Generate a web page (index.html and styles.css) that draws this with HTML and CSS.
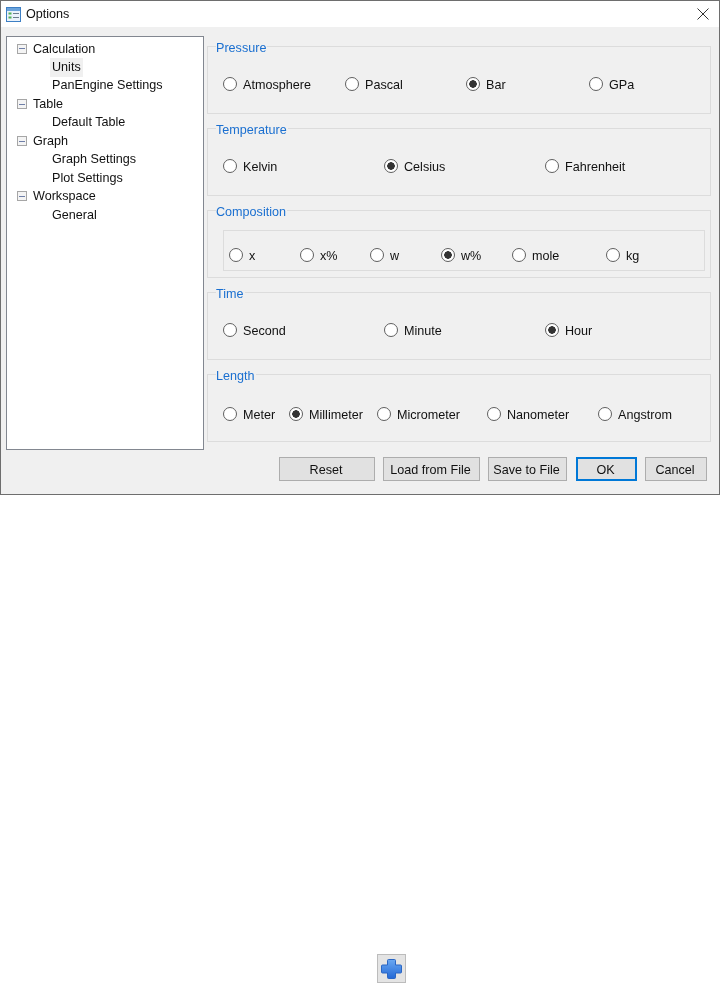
FILE: index.html
```html
<!DOCTYPE html>
<html lang="en">
<head>
<meta charset="utf-8">
<title>Options</title>
<link rel="stylesheet" href="styles.css">
</head>
<body>
<div class="window">
  <header class="titlebar">
    <svg class="title-icon" width="15" height="15" viewBox="0 0 15 15">
      <rect x="0.5" y="0.5" width="14" height="14" fill="#eaf2fb" stroke="#3d7fc4"/>
      <rect x="1" y="1" width="13" height="3" fill="#6aa3dc"/>
      <rect x="2.5" y="5.5" width="3" height="2" fill="#4fb058"/>
      <rect x="2.5" y="9.5" width="3" height="2" fill="#4fb058"/>
      <rect x="7" y="6" width="6" height="1" fill="#6b7c8f"/>
      <rect x="7" y="10" width="6" height="1" fill="#6b7c8f"/>
    </svg>
    <span class="title-text">Options</span>
    <svg class="close-icon" width="12" height="12" viewBox="0 0 12 12">
      <path d="M0.5 0.5L11.5 11.5M11.5 0.5L0.5 11.5" stroke="#333" stroke-width="1" fill="none"/>
    </svg>
  </header>
  <div class="content">
    <div class="main">
      <nav class="tree">
        <div class="node"><span class="expander"></span>Calculation</div>
        <div class="leaf"><span class="selected">Units</span></div>
        <div class="leaf"><span class="label">PanEngine Settings</span></div>
        <div class="node"><span class="expander"></span>Table</div>
        <div class="leaf"><span class="label">Default Table</span></div>
        <div class="node"><span class="expander"></span>Graph</div>
        <div class="leaf"><span class="label">Graph Settings</span></div>
        <div class="leaf"><span class="label">Plot Settings</span></div>
        <div class="node"><span class="expander"></span>Workspace</div>
        <div class="leaf"><span class="label">General</span></div>
      </nav>
      <div class="groups">
        <fieldset class="group">
          <legend>Pressure</legend>
          <div class="radios pressure">
            <label class="radio"><input type="radio" name="p">Atmosphere</label>
            <label class="radio"><input type="radio" name="p">Pascal</label>
            <label class="radio"><input type="radio" name="p" checked>Bar</label>
            <label class="radio"><input type="radio" name="p">GPa</label>
          </div>
        </fieldset>
        <fieldset class="group">
          <legend>Temperature</legend>
          <div class="radios thirds">
            <label class="radio"><input type="radio" name="t">Kelvin</label>
            <label class="radio"><input type="radio" name="t" checked>Celsius</label>
            <label class="radio"><input type="radio" name="t">Fahrenheit</label>
          </div>
        </fieldset>
        <fieldset class="group">
          <legend>Composition</legend>
          <div class="radios composition">
            <label class="radio"><input type="radio" name="c">x</label>
            <label class="radio"><input type="radio" name="c">x%</label>
            <label class="radio"><input type="radio" name="c">w</label>
            <label class="radio"><input type="radio" name="c" checked>w%</label>
            <label class="radio"><input type="radio" name="c">mole</label>
            <label class="radio"><input type="radio" name="c">kg</label>
          </div>
        </fieldset>
        <fieldset class="group">
          <legend>Time</legend>
          <div class="radios thirds">
            <label class="radio"><input type="radio" name="h">Second</label>
            <label class="radio"><input type="radio" name="h">Minute</label>
            <label class="radio"><input type="radio" name="h" checked>Hour</label>
          </div>
        </fieldset>
        <fieldset class="group">
          <legend>Length</legend>
          <div class="radios length">
            <label class="radio"><input type="radio" name="l">Meter</label>
            <label class="radio"><input type="radio" name="l" checked>Millimeter</label>
            <label class="radio"><input type="radio" name="l">Micrometer</label>
            <label class="radio"><input type="radio" name="l">Nanometer</label>
            <label class="radio"><input type="radio" name="l">Angstrom</label>
          </div>
        </fieldset>
      </div>
    </div>
    <footer class="actions">
      <button class="btn btn-reset">Reset</button>
      <button class="btn btn-load">Load from File</button>
      <button class="btn btn-save">Save to File</button>
      <button class="btn btn-ok">OK</button>
      <button class="btn btn-cancel">Cancel</button>
    </footer>
  </div>
</div>
<div class="add-row">
  <button class="add-btn" aria-label="Add">
    <svg width="23" height="22" viewBox="0 0 23 22">
      <defs>
        <linearGradient id="plus" x1="0" y1="0" x2="0" y2="1">
          <stop offset="0" stop-color="#6aa8f2"/>
          <stop offset="1" stop-color="#2469d6"/>
        </linearGradient>
      </defs>
      <path d="M7.5 2.5a1 1 0 0 1 1-1h6a1 1 0 0 1 1 1V7h5a1 1 0 0 1 1 1v6a1 1 0 0 1-1 1h-5v4.5a1 1 0 0 1-1 1h-6a1 1 0 0 1-1-1V15h-5a1 1 0 0 1-1-1V8a1 1 0 0 1 1-1h5z" fill="url(#plus)" stroke="#2a66c4" stroke-width="1"/>
    </svg>
  </button>
</div>
</body>
</html>
```
FILE: styles.css
```css
* { box-sizing: border-box; }

html, body {
  margin: 0;
  padding: 0;
  background: #fff;
}

body {
  height: 983px;
  overflow: hidden;
  font-family: "Liberation Sans", Arial, sans-serif;
  font-size: 12.6px;
  color: #111;
}

.window {
  width: 720px;
  height: 495px;
  border: 1px solid #6e6e6e;
  background: #f0f0f0;
  display: flex;
  flex-direction: column;
  filter: blur(0.3px);
}

.titlebar {
  height: 26px;
  background: #fff;
  display: flex;
  align-items: center;
  padding: 0 10px 0 5px;
}

.title-icon { flex: none; }

.title-text {
  margin-left: 5px;
  flex: 1;
}

.close-icon { flex: none; }

.content {
  padding: 9px 12px 0 5px;
  flex: 1;
  display: flex;
  flex-direction: column;
}

.main {
  display: flex;
  gap: 3px;
  margin-right: -4px;
}

.tree {
  width: 198px;
  height: 414px;
  flex: none;
  background: #fff;
  border: 1px solid #828790;
  padding-top: 2.6px;
}

.node, .leaf {
  height: 18.45px;
  line-height: 18.45px;
  white-space: nowrap;
  display: flex;
  align-items: center;
}

.node { padding-left: 10px; }

.leaf { padding-left: 43px; }

.expander {
  width: 10px;
  height: 10px;
  margin-right: 6px;
  flex: none;
  border: 1px solid #a6a6a6;
  background: linear-gradient(#6f7fa8, #6f7fa8) center / 6px 1px no-repeat, #f4f4f4;
}

.label { padding: 0 2px; }

.selected {
  padding: 0 2px;
  height: 19px;
  width: 33px;
  line-height: 19px;
  background: #f0f0f0;
}

.groups {
  flex: 1;
  margin-top: 4px;
  display: flex;
  flex-direction: column;
  gap: 8px;
}

.group {
  margin: 0;
  padding: 0;
  height: 74px;
  border: 1px solid #dcdcdc;
  min-width: 0;
}

.group legend {
  margin-left: 8px;
  padding: 0 1px 0 0;
  height: 12px;
  line-height: 17px;
  color: #1a6fd0;
}

.radios {
  display: grid;
  align-items: center;
  height: 16px;
  margin: 25px 0 0 15px;
}

.pressure { grid-template-columns: 122px 121px 123px auto; }

.thirds { grid-template-columns: 161px 161px auto; }

.length {
  grid-template-columns: 66px 88px 110px 111px auto;
  margin-top: 27px;
}

.composition {
  grid-template-columns: 71px 70px 71px 71px 94px auto;
  height: 41px;
  margin: 14px 5px 0 15px;
  padding: 11px 0 0 5px;
  border: 1px solid #dcdcdc;
}

.radio {
  display: flex;
  align-items: center;
  gap: 6px;
  white-space: nowrap;
}

.radio input {
  appearance: none;
  -webkit-appearance: none;
  margin: 0 0 2px;
  width: 14px;
  height: 14px;
  flex: none;
  border: 1px solid #5f5f5f;
  border-radius: 50%;
  background: #fff;
}

.radio input:checked {
  background: radial-gradient(circle, #333 0 3.5px, #fff 4px);
}

.actions {
  display: flex;
  margin-top: 7px;
  margin-right: 0;
}

.btn {
  height: 24px;
  padding: 1px 2px 0 0;
  font: inherit;
  color: inherit;
  background: #e1e1e1;
  border: 1px solid #adadad;
}

.btn-reset { width: 96px; margin-left: 273px; }
.btn-load { width: 97px; margin-left: 8px; }
.btn-save { width: 79px; margin-left: 8px; }
.btn-ok { width: 61px; margin-left: 9px; border: 2px solid #0078d7; }
.btn-cancel { width: 62px; margin-left: 8px; }

.add-row {
  margin-top: 459px;
  padding-left: 377px;
}

.add-btn {
  display: flex;
  align-items: center;
  justify-content: center;
  width: 29px;
  height: 29px;
  padding: 0;
  background: #e4e4e4;
  border: 1px solid #bcbcbc;
}
```
